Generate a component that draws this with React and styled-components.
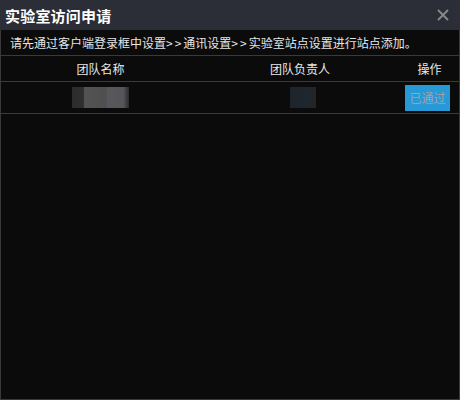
import React from "react";
import styled, { createGlobalStyle } from "styled-components";

const Global = createGlobalStyle`
  html, body { margin: 0; padding: 0; background: #0b0b0b; }
  body { font-family: "Noto Sans CJK SC", "Liberation Sans", sans-serif; }
`;

const Window = styled.div`
  width: 460px;
  height: 400px;
  box-sizing: border-box;
  border: 1px solid #3a3a3a;
  border-top: none;
  background: #0b0b0b;
  display: flex;
  flex-direction: column;
`;

const TitleBar = styled.div`
  height: 30px;
  margin: 0 -1px;
  background: #2c2e37;
  display: flex;
  align-items: center;
  justify-content: space-between;
  padding: 0 9px 0 5px;
`;

const Title = styled.div`
  color: #ffffff;
  font-size: 15px;
  font-weight: bold;
  letter-spacing: 0.2px;
`;

const Close = styled.button`
  background: none;
  border: none;
  padding: 0;
  width: 16px;
  height: 16px;
  display: flex;
  align-items: center;
  justify-content: center;
  cursor: pointer;
`;

const Notice = styled.div`
  height: 25px;
  line-height: 25px;
  padding-left: 9px;
  color: #e6e6e6;
  font-size: 12px;
  white-space: nowrap;
  border-bottom: 1px solid #3a3a3a;
`;

const Arrow = styled.span`
  letter-spacing: 2px;
`;

const Row = styled.div`
  display: grid;
  grid-template-columns: 199px 200px 59px;
  height: ${(p) => p.h}px;
  border-bottom: 1px solid #3a3a3a;
  align-items: center;
`;

const Cell = styled.div`
  display: flex;
  justify-content: center;
  align-items: center;
  color: #e8e8e8;
  font-size: 12px;
`;

const Blur = styled.div`
  width: ${(p) => p.w}px;
  height: 21px;
  background: ${(p) => p.bg};
  filter: blur(0.6px);
`;

const ActionButton = styled.button`
  width: 45px;
  height: 26px;
  margin-right: 4px;
  border: none;
  background: #2799d6;
  color: #a3a3a3;
  font-size: 12px;
  font-family: inherit;
  padding: 0;
`;

export default function App() {
  return (
    <>
      <Global />
      <Window>
        <TitleBar>
          <Title>实验室访问申请</Title>
          <Close aria-label="close">
            <svg width="12" height="12" viewBox="0 0 12 12">
              <path d="M1 1 L11 11 M11 1 L1 11" stroke="#8a8a8a" strokeWidth="1.8" />
            </svg>
          </Close>
        </TitleBar>
        <Notice>
          请先通过客户端登录框中设置<Arrow>&gt;&gt;</Arrow>通讯设置<Arrow>&gt;&gt;</Arrow>实验室站点设置进行站点添加。
        </Notice>
        <Row h={25}>
          <Cell>团队名称</Cell>
          <Cell>团队负责人</Cell>
          <Cell>操作</Cell>
        </Row>
        <Row h={31}>
          <Cell>
            <Blur
              w={57}
              bg="linear-gradient(90deg, #2b2d2d 0%, #2e2f2f 20%, #535353 22%, #4f4f50 60%, #58585c 62%, #56565a 90%, #2a2a2a 100%)"
            />
          </Cell>
          <Cell style={{ paddingLeft: 5 }}>
            <Blur
              w={26}
              bg="linear-gradient(90deg, #1e242b 0%, #1f262d 85%, #2e2219 100%)"
            />
          </Cell>
          <Cell>
            <ActionButton>已通过</ActionButton>
          </Cell>
        </Row>
      </Window>
    </>
  );
}
